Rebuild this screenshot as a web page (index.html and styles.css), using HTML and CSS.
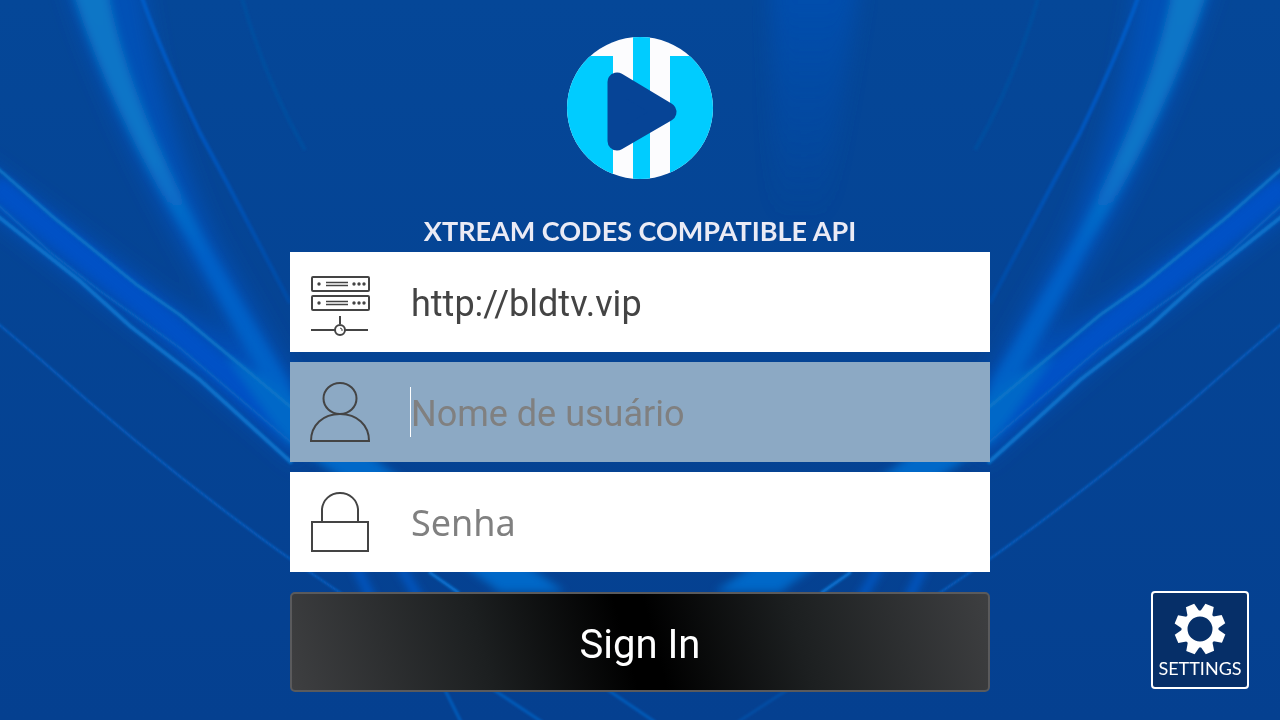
FILE: index.html
```html
<!DOCTYPE html>
<html lang="pt-BR">
<head>
  <meta charset="UTF-8" />
  <meta name="viewport" content="width=device-width, initial-scale=1.0"/>
  <title>Sign In</title>
  <link rel="stylesheet" href="styles.css">
</head>
<body>
  <svg class="backdrop" viewBox="0 0 1280 720" preserveAspectRatio="xMidYMid slice" aria-hidden="true">
    <defs>
      <filter id="soft" x="-20%" y="-20%" width="140%" height="140%"><feGaussianBlur stdDeviation="10"/></filter>
      <filter id="mid" x="-20%" y="-20%" width="140%" height="140%"><feGaussianBlur stdDeviation="4"/></filter>
      <filter id="fine" x="-20%" y="-20%" width="140%" height="140%"><feGaussianBlur stdDeviation="1"/></filter>
      <linearGradient id="fade" x1="0" y1="0" x2="0" y2="1">
        <stop offset="0" stop-color="#0650b4"/>
        <stop offset="1" stop-color="#0650b4" stop-opacity="0"/>
      </linearGradient>
      <linearGradient id="base" x1="0" y1="0" x2="0" y2="1">
        <stop offset="0" stop-color="#054798"/>
        <stop offset="1" stop-color="#054090"/>
      </linearGradient>
      <linearGradient id="ray" gradientUnits="userSpaceOnUse" x1="0" y1="0" x2="0" y2="400">
        <stop offset="0" stop-color="#0876c6"/>
        <stop offset=".4" stop-color="#0874c8"/>
        <stop offset=".65" stop-color="#0560c8"/>
        <stop offset="1" stop-color="#0562c6"/>
      </linearGradient>
      <linearGradient id="thin" gradientUnits="userSpaceOnUse" x1="0" y1="0" x2="0" y2="310">
        <stop offset="0" stop-color="#055cc6"/>
        <stop offset=".4" stop-color="#0556be"/>
        <stop offset="1" stop-color="#054ba4"/>
      </linearGradient>
      <g id="beams" fill="none">
        <!-- wide glow -->
        <g filter="url(#soft)">
          <path d="M74 -20 L142 -20 Q160 120 215 240 L300 390 L262 380 Q120 160 66 -20Z" fill="#0554c0" opacity=".75"/>
          <path d="M-20 158 L170 300 L225 335 L300 395 L300 465 L160 345 L-20 205Z" fill="#0552c2" opacity=".75"/>
        </g>
        <g filter="url(#mid)">
          <path d="M72 -10 L108 -10 Q125 90 205 240 L290 385 V412 L262 378 L188 240 Q110 110 72 -10Z" fill="url(#ray)"/>
          <path d="M-5 185 L137 298 L285 425" stroke="#0551c6" stroke-width="22"/>
          <path d="M225 355 L290 392 L385 467 L565 592 L500 592 L345 480 L285 440Z" fill="#0668c8"/>
          <path d="M356 566 L372 600 M400 566 L420 600" stroke="#0558c6" stroke-width="8"/>
        </g>
        <!-- sharp edges -->
        <g filter="url(#fine)">
          <path d="M-5 166 L53 217 L137 285 L180 315 L250 373 L292 408" stroke="#0b75c8" stroke-width="3"/>
          <path d="M-5 202 L50 252 L100 291 L180 348 L292 443" stroke="#0967c4" stroke-width="2"/>
          <path d="M-5 214 L80 281 L130 326 L200 380 L292 463" stroke="#0a72cb" stroke-width="4"/>
          <path d="M141 -5 Q160 50 200 133 L227 183 L290 303" stroke="url(#thin)" stroke-width="4"/>
          <path d="M241 -5 Q265 80 305 150" stroke="#064e9f" stroke-width="4"/>
          <path d="M-5 321 L41 360 Q165 470 286 556 L345 596" stroke="#0860c4" stroke-width="2"/>
          <path d="M429 572 L459 593" stroke="#0873d2" stroke-width="3"/>
        </g>
      </g>
    </defs>
    <rect width="1280" height="720" fill="url(#base)"/>
    <path d="M770 -20 H860 L825 220 H775Z" fill="url(#fade)" filter="url(#soft)" opacity=".8"/>
    <use href="#beams"/>
    <use href="#beams" transform="translate(1280 0) scale(-1 1)"/>
    <g fill="none" stroke="#065ab8" stroke-width="3" filter="url(#fine)">
      <path d="M494 690 L542 722 M445 690 L461 722 M608 690 L655 722"/>
      <path d="M787 690 L738 722" opacity=".5"/>
    </g>
  </svg>

  <div class="container">
    <main class="login">
      <svg class="logo" viewBox="0 0 146 142" role="img" aria-label="Logo">
        <clipPath id="disc"><ellipse cx="73" cy="71" rx="73" ry="71"/></clipPath>
        <g clip-path="url(#disc)">
          <rect width="146" height="142" fill="#fcfcfe"/>
          <rect y="19" width="46" height="123" fill="#00ccff"/>
          <rect x="66" width="17" height="142" fill="#00ccff"/>
          <rect x="103" y="19" width="43" height="123" fill="#00ccff"/>
        </g>
        <path d="M50 45 V104 L100 75Z" fill="#064496" stroke="#064496" stroke-width="19" stroke-linejoin="round"/>
      </svg>

      <h1>XTREAM CODES COMPATIBLE API</h1>

      <form onsubmit="return false">
        <label class="field">
          <svg class="icon" viewBox="0 0 60 60" aria-hidden="true">
            <g fill="none" stroke="#444" stroke-width="2">
              <rect x="2" y="5" width="57" height="14" rx="1"/>
              <rect x="2" y="24" width="57" height="14" rx="1"/>
              <path d="M16 10.500H38M16 13.500H38M16 29.500H38M16 32.500H38" stroke-width="1.4"/>
              <path d="M30 44V52M1 58H25M35 58H58"/>
              <circle cx="30" cy="58" r="5"/>
              <path d="M30 56 L32 57 V59" stroke-width="1"/>
            </g>
            <g fill="#444">
              <circle cx="9" cy="12" r="1.700"/>
              <circle cx="44" cy="12" r="1.700"/>
              <circle cx="49" cy="12" r="1.700"/>
              <circle cx="54" cy="12" r="1.700"/>
              <circle cx="9" cy="31" r="1.700"/>
              <circle cx="44" cy="31" r="1.700"/>
              <circle cx="49" cy="31" r="1.700"/>
              <circle cx="54" cy="31" r="1.700"/>
            </g>
          </svg>
          <input type="text" name="server" value="http://bldtv.vip" aria-label="Server">
        </label>

        <label class="field active">
          <svg class="icon" viewBox="0 0 60 60" aria-hidden="true">
            <g fill="none" stroke="#444" stroke-width="2">
              <ellipse cx="30" cy="16.500" rx="16.500" ry="15.500"/>
              <path d="M1 59 C1 43 13 32 30 32 S59 43 59 59Z"/>
            </g>
          </svg>
          <input type="text" name="username" placeholder="Nome de usuário" aria-label="Nome de usuário">
        </label>

        <label class="field">
          <svg class="icon" viewBox="0 0 60 60" aria-hidden="true">
            <g fill="none" stroke="#444" stroke-width="2">
              <rect x="2" y="30" width="56" height="29"/>
              <path d="M12 30 V17 C13 8 20 1 30 1 S47 8 48 17 V30"/>
            </g>
          </svg>
          <input class="password" type="password" name="password" placeholder="Senha" aria-label="Senha">
        </label>

        <button class="signin-btn" type="submit">Sign In</button>
      </form>
    </main>

    <button class="settings-btn" type="button">
      <svg class="gear" viewBox="-26 -26 52 52" aria-hidden="true">
        <defs><path id="tooth" d="M-6.500 -16 L-4.500 -25.500 H4.500 L6.500 -16Z"/></defs>
        <circle r="15.500" fill="none" stroke="#fff" stroke-width="6"/>
        <g fill="#fff">
          <use href="#tooth" transform="rotate(22)"/>
          <use href="#tooth" transform="rotate(67)"/>
          <use href="#tooth" transform="rotate(112)"/>
          <use href="#tooth" transform="rotate(157)"/>
          <use href="#tooth" transform="rotate(202)"/>
          <use href="#tooth" transform="rotate(247)"/>
          <use href="#tooth" transform="rotate(292)"/>
          <use href="#tooth" transform="rotate(337)"/>
        </g>
      </svg>
      SETTINGS
    </button>
  </div>
</body>
</html>
```
FILE: styles.css
```css
* {
  box-sizing: border-box;
}
body {
  margin: 0;
  font-family: Roboto, sans-serif;
  background: #054291;
  color: #444;
}
.backdrop {
  position: fixed;
  inset: 0;
  width: 100%;
  height: 100%;
  z-index: -1;
}
.container {
  display: grid;
  grid-template-columns: 1fr minmax(0, 700px) 1fr;
  min-height: 100vh;
}
.login {
  grid-column: 2;
  padding: 37px 0 28px;
}
.logo {
  display: block;
  width: 146px;
  height: 142px;
  margin: 0 auto;
}
h1 {
  margin: 32px 0 1px;
  font-family: Lato, sans-serif;
  font-size: 27px;
  font-weight: bold;
  line-height: 40px;
  text-align: center;
  color: #ebebf5;
}
form {
  display: flex;
  flex-direction: column;
  gap: 10px;
}
.field {
  display: flex;
  align-items: center;
  gap: 40px;
  height: 100px;
  padding: 0 20px;
  background: white;
}
.field.active {
  background: #8ca9c4;
}
.icon {
  flex: none;
  width: 60px;
  height: 60px;
  overflow: visible;
}
.field input {
  flex: 1;
  min-width: 0;
  height: 50px;
  padding: 4px 0 0;
  border: 0;
  border-left: 1px solid transparent;
  outline: none;
  background: none;
  font-family: Roboto, sans-serif;
  font-size: 36px;
  color: #444;
}
.field.active input {
  border-left-color: white;
}
.field input::placeholder {
  color: #808080;
  opacity: 1;
}
.field input.password {
  padding: 0;
  font-family: "Noto Sans", sans-serif;
}
.signin-btn {
  height: 100px;
  margin-top: 10px;
  padding: 4px 0 0;
  border: 2px solid #5a5a5c;
  border-radius: 5px;
  background: linear-gradient(75deg, #3e3f41, #1c1f20 28%, #000 48%, #000 52%, #1c1f20 72%, #3e3f41);
  color: white;
  font-family: Roboto, sans-serif;
  font-size: 40px;
  cursor: pointer;
}
.settings-btn {
  display: flex;
  flex-direction: column;
  align-items: center;
  justify-content: center;
  align-self: end;
  justify-self: end;
  width: 98px;
  height: 98px;
  margin: 31px;
  padding: 4px 0 0;
  border: 2px solid white;
  border-radius: 4px;
  background: #062f68;
  color: white;
  font-family: Lato, sans-serif;
  font-size: 18px;
  line-height: 26px;
  cursor: pointer;
}
.gear {
  width: 52px;
  height: 52px;
}
```
